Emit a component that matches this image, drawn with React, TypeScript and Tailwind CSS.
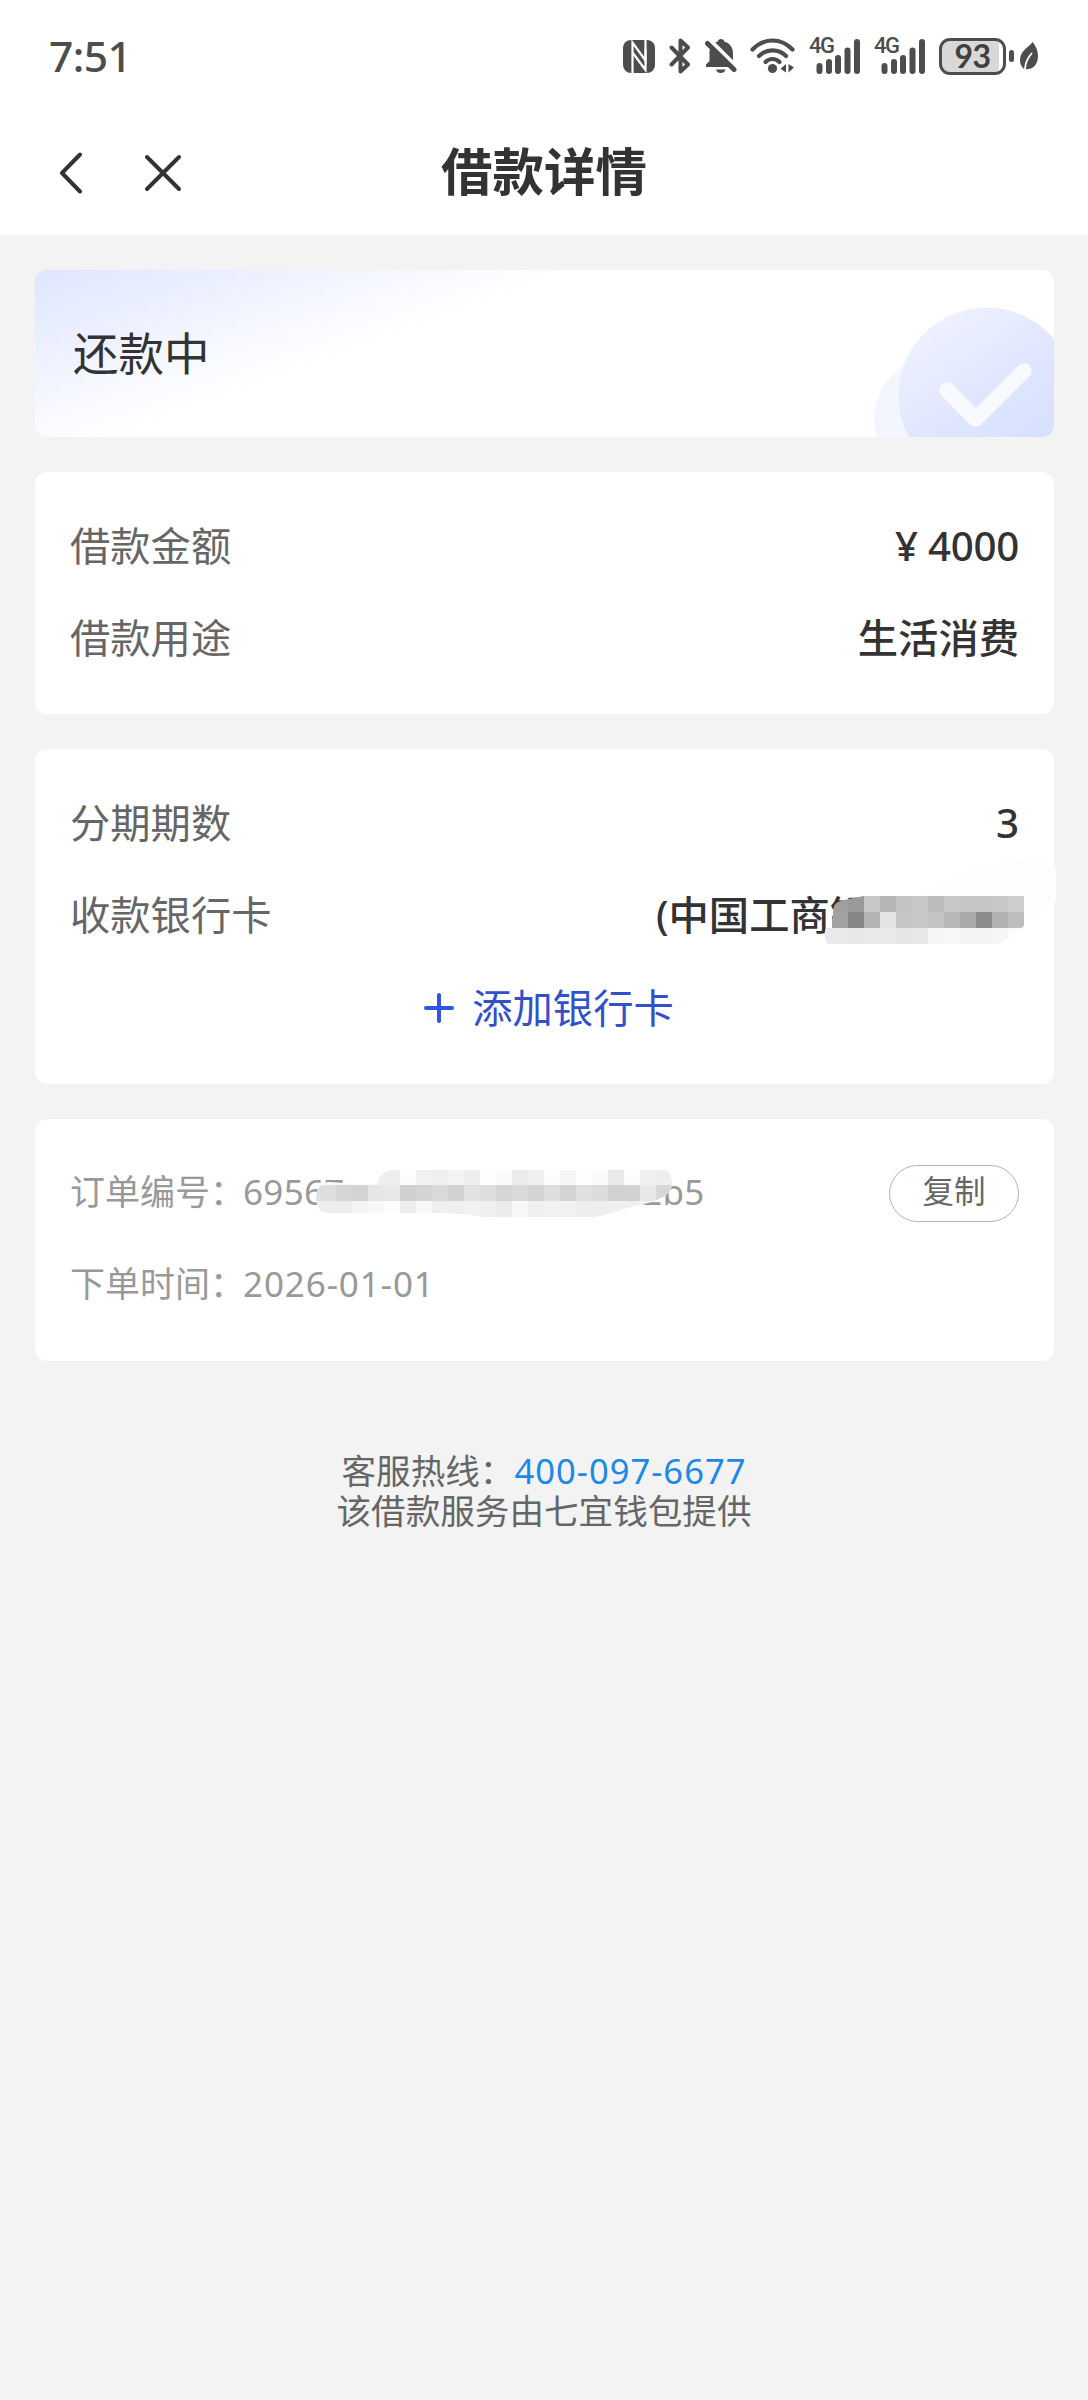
import type { ReactNode } from 'react';

interface RowProps {
  label: string;
  children: ReactNode;
}

interface MosaicRow {
  x: number;
  y: number;
  tones: string[];
}

const BLOCK = 16;

// Grey levels of the blocks that hide the card number
const cardMosaic: MosaicRow[] = [
  { x: 16, y: 36, tones: ['a0', '99', 'c8', 'b5', 'c3', 'c8', 'bc', 'c8', 'c6', 'c6', 'c8', 'cd'] },
  { x: 16, y: 52, tones: ['a2', '85', 'b3', 'e3', 'c6', 'c8', 'c3', 'b7', 'aa', '8b', 'b2', 'be'] },
  { x: 0, y: 68, tones: ['e9', 'ea', 'e8', 'e9', 'e9', 'e6', 'e8', 'f6', 'f8', 'f4', 'f3', 'f6', 'fa'] },
];

// Grey levels of the blocks that hide the order number
const orderMosaic: MosaicRow[] = [
  { x: 64, y: 0, tones: ['f0', 'ed', 'fc', 'f1', 'ef', 'f3', 'ee', 'fd', 'fa', 'ec', 'f0', 'fc', 'f6', 'fd', 'fa', 'e9', 'fc', 'f0', 'ee'] },
  { x: 0, y: 16, tones: ['e0', 'de', 'd6', 'd3', 'e6', 'e8', 'd0', 'd4', 'd9', 'd2', 'e2', 'dd', 'd5', 'd9', 'd4', 'de', 'd3', 'e0', 'dc', 'd2', 'd2', 'e8', 'd8'] },
  { x: 0, y: 32, tones: ['ee', 'ed', 'ec', 'f5', 'f8', 'fc', 'ec', 'f8', 'ef', 'ee', 'f2', 'f0', 'ec', 'f7', 'ef', 'f1', 'f1', 'ee', 'ee', 'f0', 'f0', 'f2', 'f2'] },
];

function MosaicBlocks({ rows }: { rows: MosaicRow[] }) {
  return (
    <>
      {rows.map((row) =>
        row.tones.map((tone, i) => (
          <rect
            key={`${row.y}-${i}`}
            x={row.x + i * BLOCK}
            y={row.y}
            width={BLOCK}
            height={BLOCK}
            fill={`#${tone}${tone}${tone}`}
            shapeRendering="crispEdges"
          />
        ))
      )}
    </>
  );
}

function Signal() {
  return (
    <div className="relative h-[38px] w-[53px]">
      <span className="absolute -top-[3px] left-0 font-['Roboto',sans-serif] text-[22px] leading-6 font-medium tracking-[-1.5px]">
        4G
      </span>
      <svg className="h-[38px] w-[53px]" viewBox="0 0 53 38" fill="#4d4d4d">
        <rect x="7.500" y="26" width="6" height="11" rx="3" />
        <rect x="17" y="22" width="6" height="15" rx="3" />
        <rect x="26" y="18" width="6" height="19" rx="3" />
        <rect x="35.500" y="10.500" width="6" height="26.500" rx="3" />
        <rect x="45" y="2" width="6" height="35" rx="3" />
      </svg>
    </div>
  );
}

function StatusBar() {
  return (
    <div className="flex h-[110px] items-center justify-between pt-0.5 pr-[50px] pl-[49px] text-[#4d4d4d]">
      <span className="text-[42.500px] leading-none font-medium tracking-[-0.6px]">7:51</span>
      <div className="flex items-center">
        {/* NFC */}
        <svg className="h-[33px] w-8" viewBox="0 0 32 33">
          <rect width="32" height="33" rx="8" fill="#4d4d4d" />
          <path d="M9.500 33V2.500L22.500 20.500V9" fill="none" stroke="#fff" strokeWidth="2.200" />
          <path d="M9.500 12.500L22.500 30V0" fill="none" stroke="#fff" strokeWidth="2.200" />
        </svg>
        {/* Bluetooth */}
        <svg className="ml-3.5 h-9 w-[22px]" viewBox="0 0 22 36" fill="none" stroke="#4d4d4d" strokeWidth="4" strokeLinecap="round" strokeLinejoin="round">
          <path d="M2.500 9.500L19 26.500L11.500 33.500V2.500L19 9.500L2.500 26.500" />
        </svg>
        {/* Muted bell */}
        <svg className="ml-3.5 h-9 w-8" viewBox="0 0 32 36">
          <path d="M16 1C17.800 1 19 2 19.300 3.600C24.500 5 28 9.500 28 15V24L31 29H1V26.500L4.500 23V15C4.500 9.500 7.500 5 12.700 3.600C13 2 14.200 1 16 1Z" fill="#4d4d4d" />
          <path d="M11 31.500H20.500C20 34 18 35 15.700 35C13.500 35 11.500 34 11 31.500Z" fill="#4d4d4d" />
          <path d="M4 1L32 29" stroke="#fff" strokeWidth="4" />
          <path d="M0 0H9L2 9H0Z" fill="#fff" />
          <path d="M2.500 5.500L29 31.500" stroke="#4d4d4d" strokeWidth="5" strokeLinecap="round" />
        </svg>
        {/* Wifi */}
        <svg className="ml-[13px] h-9 w-[46px]" viewBox="0 0 46 36" fill="none" stroke="#4d4d4d" strokeWidth="4.200" strokeLinecap="round">
          <path d="M2.500 11.500C14 -0.500 31 -0.500 42.500 11.500" />
          <path d="M9 18C16.500 10.500 28.500 10.500 36 18" />
          <path d="M15.500 24C19.500 20 25.500 20 29.500 24" />
          <circle cx="22.500" cy="30.500" r="4.600" fill="#4d4d4d" stroke="none" />
          <path d="M36 26V34.500L30.500 30.800Z M38.500 26V34.500L44 29.500Z" fill="#4d4d4d" stroke="none" />
        </svg>
        <div className="ml-[13px] flex gap-3">
          <Signal />
          <Signal />
        </div>
        {/* Battery */}
        <div className="ml-3 flex h-[37px] w-[67px] items-center justify-center rounded-[11px] border-[3px] border-[#4d4d4d] bg-linear-to-r from-[#d8d8d8] from-93% to-white to-93%">
          <span className="font-['Lato','Noto_Sans',sans-serif] text-[32px] leading-none font-bold tracking-[-0.5px] text-[#404040]">93</span>
        </div>
        <div className="ml-[3px] h-3 w-[5px] rounded-full bg-[#4d4d4d]" />
        {/* Power saving leaf */}
        <svg className="ml-1.5 h-7 w-[18px]" viewBox="0 0 18 28">
          <path d="M12.500 0C9 5.500 0 8 0 18.500C0 22 1.500 25 4 27C11 28.500 18 24 18 14C18 8.500 15.500 3.500 12.500 0Z" fill="#4d4d4d" />
          <path d="M5 27.500C5 20.500 8 15.500 12 11" fill="none" stroke="#fff" strokeWidth="1.800" />
        </svg>
      </div>
    </div>
  );
}

function NavBar() {
  return (
    <div className="grid h-[125px] grid-cols-3 items-center px-[58px]">
      <div className="flex items-center gap-[60px]">
        <svg className="h-[42px] w-[26px]" viewBox="0 0 26 42" fill="none" stroke="#333" strokeWidth="4" strokeLinecap="round" strokeLinejoin="round">
          <path d="M22 2.500L4 21L22 39.500" />
        </svg>
        <svg className="h-[38px] w-[38px]" viewBox="0 0 38 38" fill="none" stroke="#333" strokeWidth="4" strokeLinecap="round">
          <path d="M3 3L35 35M35 3L3 35" />
        </svg>
      </div>
      <h1 className="pb-0.5 text-center text-[51.500px] leading-none font-bold whitespace-nowrap text-[#333]">借款详情</h1>
    </div>
  );
}

function Row({ label, children }: RowProps) {
  return (
    <div className="flex h-[92px] items-center justify-between text-[40.300px]">
      <span className="text-[#666]">{label}</span>
      <span className="font-medium text-[#333]">{children}</span>
    </div>
  );
}

export default function App() {
  return (
    <div className="min-h-[2400px] w-[1088px] bg-[#f3f3f3] font-['Noto_Sans','Noto_Sans_CJK_SC',sans-serif]">
      <header className="bg-white">
        <StatusBar />
        <NavBar />
      </header>

      <main className="flex flex-col gap-[35px] pt-[35px] pr-[34px] pl-[35px]">
        {/* Loan status */}
        <section className="relative flex h-[167px] items-center overflow-hidden rounded-xl bg-[linear-gradient(160deg,#dfe5ff_0%,#e9eeff_12%,#f4f6ff_23%,#fff_36%)] pl-[38px]">
          <span className="text-[45.500px] leading-none text-[#333]">还款中</span>
          <svg className="absolute right-0 bottom-0 h-[167px] w-[190px]" viewBox="0 0 190 167" fill="none">
            <defs>
              <linearGradient id="disc" x1="0.15" y1="0" x2="0.7" y2="0.8">
                <stop offset="0" stopColor="#f0f4ff" />
                <stop offset="0.5" stopColor="#e3e8ff" />
                <stop offset="1" stopColor="#d7e0fe" />
              </linearGradient>
            </defs>
            <circle cx="74" cy="150" r="64" fill="#f3f6ff" />
            <circle cx="122.500" cy="125.500" r="88" fill="url(#disc)" />
            <path d="M83 120L111.500 149L160 101" stroke="#f8faff" strokeWidth="15.500" strokeLinecap="round" strokeLinejoin="round" />
          </svg>
        </section>

        {/* Loan amount and purpose */}
        <section className="h-[242px] rounded-xl bg-white px-[35px] pt-7">
          <Row label="借款金额">
            <span className="mr-2.5">¥</span>
            <span className="tracking-[-0.3px]">4000</span>
          </Row>
          <Row label="借款用途">生活消费</Row>
        </section>

        {/* Instalments and receiving card */}
        <section className="relative h-[335px] rounded-xl bg-white px-[35px] pt-7">
          <Row label="分期期数">3</Row>
          <Row label="收款银行卡">
            <span className="block w-[363px] whitespace-nowrap">(中国工商银</span>
          </Row>
          <button className="flex h-[92px] w-full items-center justify-center gap-[17px] pt-0.5 pl-2 text-[40.300px] text-[#3350c8]">
            <svg className="h-8 w-8" viewBox="0 0 32 32" stroke="#2f55e8" strokeWidth="4" strokeLinecap="round">
              <path d="M16 3V29M3 16H29" />
            </svg>
            添加银行卡
          </button>
          <svg className="absolute top-[111px] right-[-2px] h-[120px] w-60" viewBox="0 0 240 120">
            <defs>
              <clipPath id="cardMask">
                <path d="M48 36H208V66C200 72 192 78 184 84H12C8 80 8 72 10 68L16 61C18 50 16 45 22 42C30 39 38 38 48 36Z" />
              </clipPath>
            </defs>
            <path d="M224 0C234 0 240 5 240 10V40C236 50 222 55 208 60L184 84H14L100 36L160 6Z" fill="#fdfdfd" />
            <g clipPath="url(#cardMask)">
              <MosaicBlocks rows={cardMosaic} />
            </g>
          </svg>
        </section>

        {/* Order info */}
        <section className="h-[242px] rounded-xl bg-white px-[35px] pt-7 text-[35px] text-[#999]">
          <div className="flex h-[92px] items-center justify-between">
            <div className="relative flex pb-0.5 whitespace-nowrap">
              <span>订单编号：</span>
              <span className="-ml-0.5 w-[382px] tracking-[0.3px]">69567</span>
              <span className="tracking-[0.3px]">c2b5</span>
              <svg className="absolute top-[3px] left-[234px] h-12 w-[370px]" viewBox="0 0 370 48">
                <defs>
                  <clipPath id="orderMask">
                    <path d="M73 16C75 6 80 1 90 1H362C367 4 368 10 368 16C366 27 356 30 344 34C326 37 308 45 290 48H180C162 45 150 44 134 44H26C16 44 13 38 12 30C12 22 14 16 24 13Z" />
                  </clipPath>
                </defs>
                <g clipPath="url(#orderMask)">
                  <rect width="370" height="48" fill="#fafafa" />
                  <MosaicBlocks rows={orderMosaic} />
                </g>
              </svg>
            </div>
            <button className="h-[57px] w-[130px] rounded-full border border-[#b3b3b3] pb-1 text-[31.500px] leading-none text-[#666]">
              复制
            </button>
          </div>
          <div className="flex h-[92px] items-center pb-0.5">
            下单时间：<span className="-ml-0.5 tracking-[0.9px]">2026-01-01</span>
          </div>
        </section>
      </main>

      <footer className="pt-[90px] text-center text-[34.600px] leading-10 text-[#666]">
        <p>
          客服热线：<a className="tracking-[1px] text-[#1e88e5]">400-097-6677</a>
        </p>
        <p>该借款服务由七宜钱包提供</p>
      </footer>
    </div>
  );
}
